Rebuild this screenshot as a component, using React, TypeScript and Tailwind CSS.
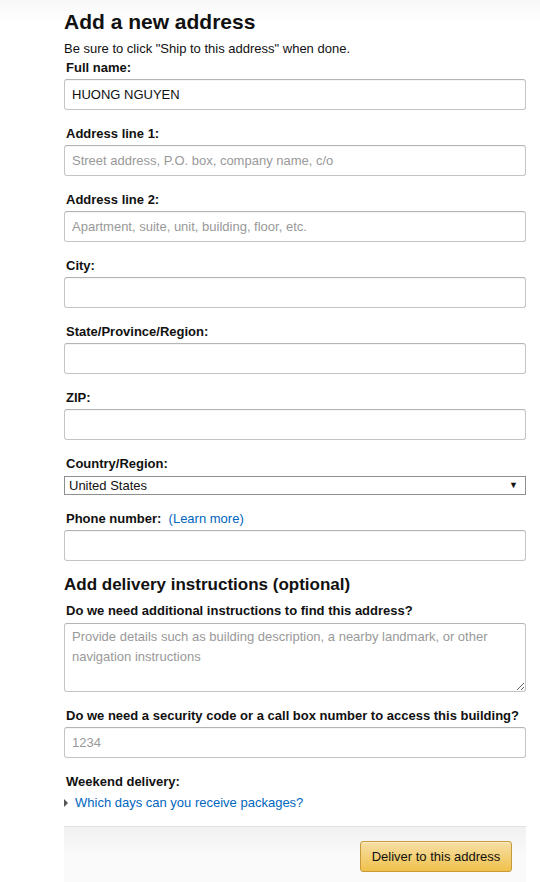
const font = { fontFamily: '"Liberation Sans", Arial, sans-serif' }

function Label({ children, className = "" }: { children: React.ReactNode; className?: string }) {
  return (
    <div className={`pl-[2px] text-[13px] font-bold leading-[19px] text-[#111] ${className}`}>{children}</div>
  )
}

function TextInput({ value, placeholder }: { value?: string; placeholder?: string }) {
  return (
    <input
      readOnly
      defaultValue={value}
      placeholder={placeholder}
      className="mt-[2px] block h-[31px] w-full rounded-[3px] border border-[#c4c4c4] border-t-[#b4b4b4] bg-white px-[7px] text-[13px] text-[#111] shadow-[inset_0_1px_0_rgba(0,0,0,0.04)] outline-none placeholder:text-[#999]"
      style={font}
    />
  )
}

export default function App() {
  const fields = [
    { label: "Address line 1:", placeholder: "Street address, P.O. box, company name, c/o" },
    { label: "Address line 2:", placeholder: "Apartment, suite, unit, building, floor, etc." },
    { label: "City:" },
    { label: "State/Province/Region:" },
    { label: "ZIP:" },
  ]

  return (
    <div className="min-h-[882px] bg-[linear-gradient(to_bottom,#f8f8f8_0px,#ffffff_24px)] pl-[64px]" style={font}>
      <div className="w-[462px] text-[#111]">
        <h1 className="pt-[10px] text-[21px] font-bold leading-[24px] text-[#111]">Add a new address</h1>
        <div className="mt-[5px] text-[13px] leading-[19px]">Be sure to click "Ship to this address" when done.</div>

        <Label>Full name:</Label>
        <TextInput value="HUONG NGUYEN" />

        {fields.map((f) => (
          <div key={f.label}>
            <Label className="mt-[14px]">{f.label}</Label>
            <TextInput placeholder={f.placeholder} />
          </div>
        ))}

        <Label className="mt-[14px]">Country/Region:</Label>
        <div className="mt-[3px] flex h-[19px] items-center justify-between border border-[#8f8f8f] bg-white pl-[4px] pr-[7px] text-[13px] text-[#111]">
          <span>United States</span>
          <span className="text-[9px]">▼</span>
        </div>

        <Label className="mt-[14px]">
          Phone number:&nbsp;{" "}
          <span className="font-normal text-[#0066c0]">(Learn more)</span>
        </Label>
        <TextInput />

        <h2 className="mt-[14px] text-[17px] font-bold leading-[20px] text-[#111]">Add delivery instructions (optional)</h2>

        <Label className="mt-[6px]">Do we need additional instructions to find this address?</Label>
        <textarea
          readOnly
          placeholder="Provide details such as building description, a nearby landmark, or other navigation instructions"
          className="mt-[3px] block h-[69px] w-full resize-y rounded-[3px] border border-[#c4c4c4] border-t-[#b4b4b4] bg-white px-[7px] pt-[3px] text-[13px] leading-[20px] text-[#111] outline-none placeholder:text-[#999]"
          style={font}
        />

        <Label className="mt-[14px]">Do we need a security code or a call box number to access this building?</Label>
        <TextInput placeholder="1234" />

        <Label className="mt-[14px]">Weekend delivery:</Label>
        <div className="mt-[2px] flex items-center text-[13px] leading-[19px] text-[#0066c0]">
          <span className="mr-[7px] inline-block h-0 w-0 border-y-[4px] border-l-[4px] border-y-transparent border-l-[#555]" />
          Which days can you receive packages?
        </div>

        <div className="mt-[14px] flex justify-end border-t border-[#e3e3e3] bg-[linear-gradient(to_bottom,#f1f1f1,#fafafa_30px)] pb-[14px] pr-[14px] pt-[14px]">
          <button
            className="h-[31px] w-[152px] rounded-[3px] border border-[#c89b3a] bg-[linear-gradient(to_bottom,#f7dfa5,#f0c14b)] text-[13px] text-[#111] shadow-[inset_0_1px_0_rgba(255,255,255,0.4)]"
            style={font}
          >
            Deliver to this address
          </button>
        </div>
      </div>
    </div>
  )
}
